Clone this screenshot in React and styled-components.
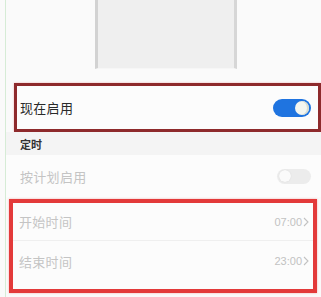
import styled, { createGlobalStyle } from "styled-components";

const GlobalStyle = createGlobalStyle`
  html, body {
    margin: 0;
    padding: 0;
    background: #fafafa;
  }
  body {
    font-family: "Noto Sans CJK SC", "Noto Sans", sans-serif;
  }
`;

const Page = styled.div`
  width: 321px;
  height: 297px;
  overflow: hidden;
  background: #fafafa;
`;

const Rail = styled.div`
  margin-left: 5px;
  height: 297px;
  border-left: 1px solid #d6ecd6;
  display: flex;
  flex-direction: column;
`;

const Preview = styled.div`
  height: 68px;
  display: flex;
  padding-left: 89px;
`;

const Frame = styled.div`
  width: 136px;
  height: 68px;
  background: #efefef;
  border-left: 3px solid #d2d2d2;
  border-right: 3px solid #d6d6d6;
  border-bottom: 1px solid #f6f6f6;
`;

const Highlight = styled.div`
  margin: ${(p) => p.$margin};
  border: ${(p) => p.$width}px solid ${(p) => p.$color};
  box-shadow: 0 0 2px ${(p) => p.$glow};
  background: #fcfcfc;
`;

const Row = styled.div`
  height: ${(p) => p.$height}px;
  display: flex;
  align-items: center;
  justify-content: space-between;
  padding: 0 ${(p) => p.$right}px ${(p) => p.$bottom || 0}px ${(p) => p.$left}px;
  box-sizing: border-box;
  background: #fcfcfc;
  & + & {
    border-top: 1px solid #efefef;
  }
`;

const Label = styled.span`
  font-size: 13px;
  color: ${(p) => (p.$muted ? "#c4c4c4" : "#2a2a2a")};
  letter-spacing: 0.3px;
`;

const SectionHead = styled.div`
  height: 23px;
  display: flex;
  align-items: center;
  padding-left: 14px;
  background: #f4f4f4;
  font-size: 11px;
  font-weight: 700;
  color: #333;
`;

const Switch = styled.div`
  width: ${(p) => (p.$on ? 38 : 34)}px;
  height: ${(p) => (p.$on ? 18 : 15)}px;
  border-radius: 10px;
  background: ${(p) => (p.$on ? "#1f74e0" : "#ececec")};
  display: flex;
  align-items: center;
  justify-content: ${(p) => (p.$on ? "flex-end" : "flex-start")};
  padding: 0 2px;
  box-sizing: border-box;
`;

const Knob = styled.div`
  width: ${(p) => (p.$on ? 14 : 12)}px;
  height: ${(p) => (p.$on ? 14 : 12)}px;
  border-radius: 50%;
  background: ${(p) => (p.$on ? "#f4f6f0" : "#fafafa")};
  box-shadow: ${(p) => (p.$on ? "inset -2px 0 0 #d8dccf" : "0 0 1px #ccc")};
`;

const Value = styled.span`
  font-family: "Liberation Sans", Arial, sans-serif;
  font-size: 11px;
  color: #c2c2c2;
  display: flex;
  align-items: center;
  gap: 1px;
`;

const Chevron = () => (
  <svg width="6" height="10" viewBox="0 0 6 10">
    <path d="M1 1 L5 5 L1 9" fill="none" stroke="#c2c2c2" strokeWidth="1.1" />
  </svg>
);

export default function App() {
  return (
    <Page>
      <GlobalStyle />
      <Rail>
        <Preview>
          <Frame />
        </Preview>
        <Highlight $margin="15px 0 0 8px" $width={3} $color="#8e2a2c" $glow="#f3b5b5">
          <Row $height={43} $left={3} $right={7}>
            <Label>现在启用</Label>
            <Switch $on>
              <Knob $on />
            </Switch>
          </Row>
        </Highlight>
        <SectionHead>定时</SectionHead>
        <Row $height={42} $left={14} $right={10}>
          <Label $muted>按计划启用</Label>
          <Switch>
            <Knob />
          </Switch>
        </Row>
        <Highlight $margin="2px 4px 0 3px" $width={4} $color="#e33a3a" $glow="#f5b0b0">
          <Row $height={37} $left={6} $right={4}>
            <Label $muted>开始时间</Label>
            <Value>
              07:00
              <Chevron />
            </Value>
          </Row>
          <Row $height={49} $left={6} $right={4} $bottom={8}>
            <Label $muted>结束时间</Label>
            <Value>
              23:00
              <Chevron />
            </Value>
          </Row>
        </Highlight>
      </Rail>
    </Page>
  );
}
